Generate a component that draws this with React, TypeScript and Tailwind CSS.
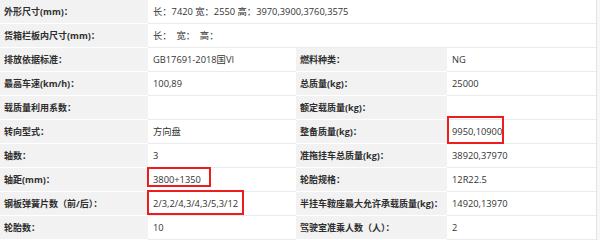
import type { ReactNode } from "react"

type Cell = { text: string; box?: string }
type Row = { label: string; value: Cell; label2?: string; value2?: Cell }

const rows: Row[] = [
  { label: "外形尺寸(mm)：", value: { text: "长：7420 宽：2550 高：3970,3900,3760,3575" } },
  { label: "货箱栏板内尺寸(mm)：", value: { text: "长：  宽：  高：" } },
  { label: "排放依据标准：", value: { text: "GB17691-2018国VI" }, label2: "燃料种类：", value2: { text: "NG" } },
  { label: "最高车速(km/h)：", value: { text: "100,89" }, label2: "总质量(kg)：", value2: { text: "25000" } },
  { label: "载质量利用系数：", value: { text: "" }, label2: "额定载质量(kg)：", value2: { text: "" } },
  {
    label: "转向型式：",
    value: { text: "方向盘" },
    label2: "整备质量(kg)：",
    value2: { text: "9950,10900", box: "left-0 -top-[4px] w-[57px] h-[28px]" },
  },
  { label: "轴数：", value: { text: "3" }, label2: "准拖挂车总质量(kg)：", value2: { text: "38920,37970" } },
  {
    label: "轴距(mm)：",
    value: { text: "3800+1350", box: "-left-[1px] -top-[1px] w-[64px] h-[20px]" },
    label2: "轮胎规格：",
    value2: { text: "12R22.5" },
  },
  {
    label: "钢板弹簧片数（前/后）：",
    value: { text: "2/3,2/4,3/4,3/5,3/12", box: "-left-[1px] -top-[2px] w-[97px] h-[25px]" },
    label2: "半挂车鞍座最大允许承载质量(kg)：",
    value2: { text: "14920,13970" },
  },
  { label: "轮胎数：", value: { text: "10" }, label2: "驾驶室准乘人数（人）：", value2: { text: "2" } },
]

function Label({ children }: { children: ReactNode }) {
  return (
    <div className="flex items-center bg-[#f2f2f2] border-b border-white pl-[4px] text-[9px] font-bold text-[#2e2e2e] whitespace-nowrap overflow-hidden">
      {children}
    </div>
  )
}

function Value({ cell, span }: { cell: Cell; span?: boolean }) {
  return (
    <div
      className={`relative flex items-center bg-white border-b border-[#ebebeb] pl-[5px] text-[9.3px] text-[#333] whitespace-pre ${
        span ? "col-span-3" : ""
      }`}
    >
      {cell.text}
      {cell.box && <span className={`absolute border-2 border-[#ee1c1c] ${cell.box}`} />}
    </div>
  )
}

export default function App() {
  return (
    <div
      className="w-[600px] h-[240px] bg-[#f7f7f7] overflow-hidden leading-none"
      style={{ fontFamily: '"Open Sans", "Noto Sans CJK SC", sans-serif' }}
    >
      <div className="w-[597px] border-r border-[#e3e3e3] bg-white">
        {rows.map((r, i) => (
          <div key={i} className="grid grid-cols-[148px_148px_151px_149px] h-[24px]">
            <Label>{r.label}</Label>
            {r.label2 === undefined ? (
              <Value cell={r.value} span />
            ) : (
              <>
                <Value cell={r.value} />
                <Label>{r.label2}</Label>
                <Value cell={r.value2!} />
              </>
            )}
          </div>
        ))}
      </div>
    </div>
  )
}
